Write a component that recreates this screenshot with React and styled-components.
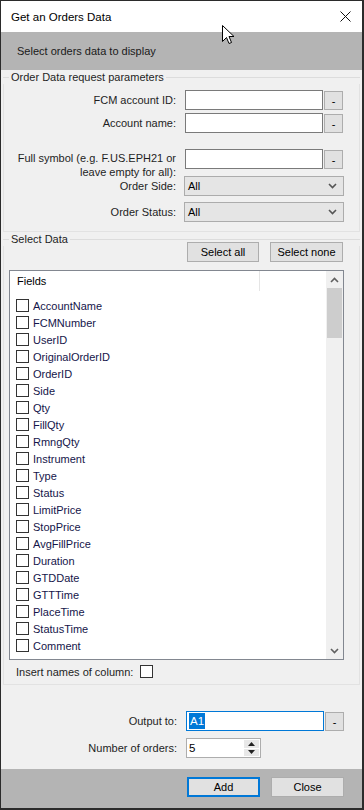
import React from "react";
import styled, { createGlobalStyle } from "styled-components";

const GlobalStyle = createGlobalStyle`
  html, body {
    margin: 0;
    padding: 0;
    background: #ffffff;
  }
  body {
    font-family: "Liberation Sans", Arial, sans-serif;
  }
`;

const FIELDS = [
  "AccountName",
  "FCMNumber",
  "UserID",
  "OriginalOrderID",
  "OrderID",
  "Side",
  "Qty",
  "FillQty",
  "RmngQty",
  "Instrument",
  "Type",
  "Status",
  "LimitPrice",
  "StopPrice",
  "AvgFillPrice",
  "Duration",
  "GTDDate",
  "GTTTime",
  "PlaceTime",
  "StatusTime",
  "Comment",
];

const Window = styled.div`
  position: relative;
  width: 364px;
  height: 810px;
  box-sizing: border-box;
  border-style: solid;
  border-color: #2b2b2b;
  border-width: 1px 2px 2px 1px;
  background: #f0f0f0;
  display: flex;
  flex-direction: column;
  font-family: "Liberation Sans", Arial, sans-serif;
  font-size: 11px;
  color: #1e1e1e;
  overflow: hidden;
`;

const TitleBar = styled.div`
  height: 31px;
  flex-shrink: 0;
  background: #ffffff;
  display: flex;
  align-items: center;
  justify-content: space-between;
  padding: 0 11px 0 10px;
  font-size: 11.5px;
  color: #000;
`;

const Banner = styled.div`
  height: 38px;
  flex-shrink: 0;
  background: #b4b4b4;
  display: flex;
  align-items: center;
  padding-left: 16px;
  font-size: 11px;
  color: #1a1a1a;
`;

const Group = styled.div`
  margin: 0 2px;
  display: flex;
  flex-direction: column;
`;

const GroupHead = styled.div`
  height: 14px;
  display: flex;
  align-items: center;

  &::before {
    content: "";
    width: 6px;
    border-top: 1px solid #dcdcdc;
  }
  &::after {
    content: "";
    flex: 1;
    border-top: 1px solid #dcdcdc;
  }
  span {
    padding: 0 2px;
    line-height: 14px;
  }
`;

const GroupBody = styled.div`
  border: 1px solid #e2e2e2;
  border-top: 0;
  padding: ${(p) => p.$pt || 0}px 0 ${(p) => p.$pb || 0}px 0;
  display: flex;
  flex-direction: column;
`;

const Row = styled.div`
  display: flex;
  align-items: ${(p) => (p.$wrap ? "flex-start" : "center")};
  margin-top: ${(p) => p.$top || 0}px;
  height: ${(p) => p.$h || 20}px;
`;

const Label = styled.div`
  width: ${(p) => p.$w || 172}px;
  flex-shrink: 0;
  text-align: right;
  line-height: 14px;
  padding-top: ${(p) => (p.$wrap ? 2 : 0)}px;
  white-space: nowrap;
`;

const TextBox = styled.div`
  box-sizing: border-box;
  width: 138px;
  height: 20px;
  margin-left: 9px;
  background: #ffffff;
  border: 1px solid ${(p) => (p.$focus ? "#0078d7" : "#7a7a7a")};
  display: flex;
  align-items: center;
  padding-left: 2px;
  font-size: 11.5px;
`;

const Selected = styled.span`
  background: #0078d7;
  color: #ffffff;
  padding: 0 1px;
  line-height: 16px;
`;

const MiniButton = styled.div`
  box-sizing: border-box;
  width: 19px;
  height: 19px;
  margin-left: 1px;
  margin-top: 1px;
  background: #e1e1e1;
  border: 1px solid #adadad;
  display: flex;
  align-items: center;
  justify-content: center;
  font-size: 11px;
  color: #000;
`;

const Select = styled.div`
  box-sizing: border-box;
  width: 160px;
  height: 20px;
  margin-left: 8px;
  background: #e5e5e5;
  border: 1px solid #acacac;
  display: flex;
  align-items: center;
  justify-content: space-between;
  padding: 0 6px 0 3px;
  font-size: 11px;
  color: #000;
`;

const ButtonRow = styled.div`
  display: flex;
  justify-content: flex-end;
  gap: ${(p) => p.$gap || 11}px;
  margin-top: ${(p) => p.$top || 0}px;
  padding-right: ${(p) => p.$pr || 0}px;
`;

const PushButton = styled.div`
  box-sizing: border-box;
  width: ${(p) => p.$w || 73}px;
  height: 20px;
  background: #e1e1e1;
  border: ${(p) => (p.$default ? "2px solid #0078d7" : "1px solid #adadad")};
  display: flex;
  align-items: center;
  justify-content: center;
  font-size: 11px;
  color: #000;
`;

const ListBox = styled.div`
  box-sizing: border-box;
  margin: 8px 0 0 5px;
  width: 335px;
  height: 390px;
  border: 1px solid #828790;
  background: #ffffff;
  display: flex;
`;

const ListContent = styled.div`
  flex: 1;
  display: flex;
  flex-direction: column;
`;

const ListHeader = styled.div`
  height: 20px;
  display: flex;
  flex-shrink: 0;
`;

const HeaderCell = styled.div`
  box-sizing: border-box;
  width: 250px;
  border-right: 1px solid #e5e5e5;
  padding-left: 7px;
  display: flex;
  align-items: center;
  font-size: 11px;
  color: #000;
`;

const Items = styled.div`
  padding-top: 6px;
  display: flex;
  flex-direction: column;
`;

const Item = styled.div`
  height: 17px;
  display: flex;
  align-items: center;
  padding-left: 6px;
  gap: 4px;
  font-size: 11px;
  color: #15154a;
`;

const Check = styled.span`
  box-sizing: border-box;
  display: inline-block;
  width: 13px;
  height: 13px;
  flex-shrink: 0;
  border: 1px solid #333333;
  background: #ffffff;
`;

const ScrollBar = styled.div`
  width: 17px;
  background: #f0f0f0;
  display: flex;
  flex-direction: column;
  align-items: center;
`;

const ScrollArrow = styled.div`
  height: 17px;
  width: 17px;
  display: flex;
  align-items: center;
  justify-content: center;
  flex-shrink: 0;
`;

const Thumb = styled.div`
  width: 15px;
  height: 50px;
  background: #cdcdcd;
`;

const ScrollTrack = styled.div`
  flex: 1;
`;

const InsertRow = styled.div`
  display: flex;
  align-items: center;
  height: 13px;
  margin-top: 5px;
  padding-left: 12px;
  gap: 7px;
`;

const OutputArea = styled.div`
  display: flex;
  flex-direction: column;
  padding-left: 3px;
`;

const Numeric = styled.div`
  box-sizing: border-box;
  width: 75px;
  height: 20px;
  margin-left: 9px;
  background: #ffffff;
  border: 1px solid #adadad;
  display: flex;
  align-items: center;
  justify-content: space-between;
  padding: 0 1px 0 2px;
  font-size: 11.5px;
  color: #000;
`;

const Spin = styled.div`
  width: 15px;
  height: 16px;
  display: flex;
  flex-direction: column;
  gap: 1px;
`;

const SpinHalf = styled.div`
  flex: 1;
  background: #e8e8e8;
  display: flex;
  align-items: center;
  justify-content: center;
`;

const Footer = styled.div`
  margin-top: auto;
  height: 39px;
  background: #b4b4b4;
  display: flex;
  flex-direction: column;
  padding-top: 8px;
  box-sizing: border-box;
`;

const Cursor = styled.svg`
  position: absolute;
  left: 221px;
  top: 24px;
`;

const Chevron = ({ up, color = "#606060" }) => (
  <svg width="9" height="6" viewBox="0 0 9 6">
    <path
      d={up ? "M1 5 L4.5 1.5 L8 5" : "M1 1 L4.5 4.5 L8 1"}
      fill="none"
      stroke={color}
      strokeWidth="1.6"
    />
  </svg>
);

const Triangle = ({ up }) => (
  <svg width="7" height="4" viewBox="0 0 7 4">
    <path d={up ? "M0 4 L3.5 0 L7 4 Z" : "M0 0 L3.5 4 L7 0 Z"} fill="#222" />
  </svg>
);

const ParamRow = ({ label, top, wrap, h }) => (
  <Row $top={top} $wrap={wrap} $h={h}>
    <Label $wrap={wrap}>{label}</Label>
    <TextBox />
    <MiniButton>-</MiniButton>
  </Row>
);

const SelectRow = ({ label, top }) => (
  <Row $top={top}>
    <Label>{label}</Label>
    <Select>
      <span>All</span>
      <Chevron color="#555" />
    </Select>
  </Row>
);

export default function App() {
  return (
    <>
      <GlobalStyle />
      <Window>
        <TitleBar>
          <span>Get an Orders Data</span>
          <svg width="11" height="11" viewBox="0 0 11 11">
            <path d="M0.5 0.5 L10.5 10.5 M10.5 0.5 L0.5 10.5" stroke="#111" strokeWidth="1" />
          </svg>
        </TitleBar>
        <Banner>Select orders data to display</Banner>

        <Group>
          <GroupHead>
            <span>Order Data request parameters</span>
          </GroupHead>
          <GroupBody $pt={6} $pb={9}>
            <ParamRow label="FCM account ID:" />
            <ParamRow label="Account name:" top={3} />
            <ParamRow
              label={
                <>
                  Full symbol (e.g. F.US.EPH21 or
                  <br />
                  leave empty for all):
                </>
              }
              top={16}
              wrap
              h={27}
            />
            <SelectRow label="Order Side:" />
            <SelectRow label="Order Status:" top={6} />
          </GroupBody>
        </Group>

        <Group>
          <GroupHead>
            <span>Select Data</span>
          </GroupHead>
          <GroupBody $pb={6}>
            <ButtonRow $top={-4} $pr={16}>
              <PushButton $w={72}>Select all</PushButton>
              <PushButton>Select none</PushButton>
            </ButtonRow>
            <ListBox>
              <ListContent>
                <ListHeader>
                  <HeaderCell>Fields</HeaderCell>
                </ListHeader>
                <Items>
                  {FIELDS.map((f) => (
                    <Item key={f}>
                      <Check />
                      <span>{f}</span>
                    </Item>
                  ))}
                </Items>
              </ListContent>
              <ScrollBar>
                <ScrollArrow>
                  <Chevron up />
                </ScrollArrow>
                <Thumb />
                <ScrollTrack />
                <ScrollArrow>
                  <Chevron />
                </ScrollArrow>
              </ScrollBar>
            </ListBox>
            <InsertRow>
              <span>Insert names of column:</span>
              <Check />
            </InsertRow>
          </GroupBody>
        </Group>

        <OutputArea>
          <Row $top={26}>
            <Label $w={173}>Output to:</Label>
            <TextBox $focus>
              <Selected>A1</Selected>
            </TextBox>
            <MiniButton>-</MiniButton>
          </Row>
          <Row $top={7}>
            <Label $w={173}>Number of orders:</Label>
            <Numeric>
              <span>5</span>
              <Spin>
                <SpinHalf>
                  <Triangle up />
                </SpinHalf>
                <SpinHalf>
                  <Triangle />
                </SpinHalf>
              </Spin>
            </Numeric>
          </Row>
        </OutputArea>

        <Footer>
          <ButtonRow $pr={18} $gap={11}>
            <PushButton $default $w={73}>
              Add
            </PushButton>
            <PushButton>Close</PushButton>
          </ButtonRow>
        </Footer>

        <Cursor width="13" height="20" viewBox="0 0 13 20">
          <path
            d="M0.5 0.5 L0.5 16.5 L4.5 12.5 L7 18.5 L9.5 17.5 L7 11.5 L12 11.5 Z"
            fill="#ffffff"
            stroke="#000000"
            strokeWidth="1"
          />
        </Cursor>
      </Window>
    </>
  );
}
